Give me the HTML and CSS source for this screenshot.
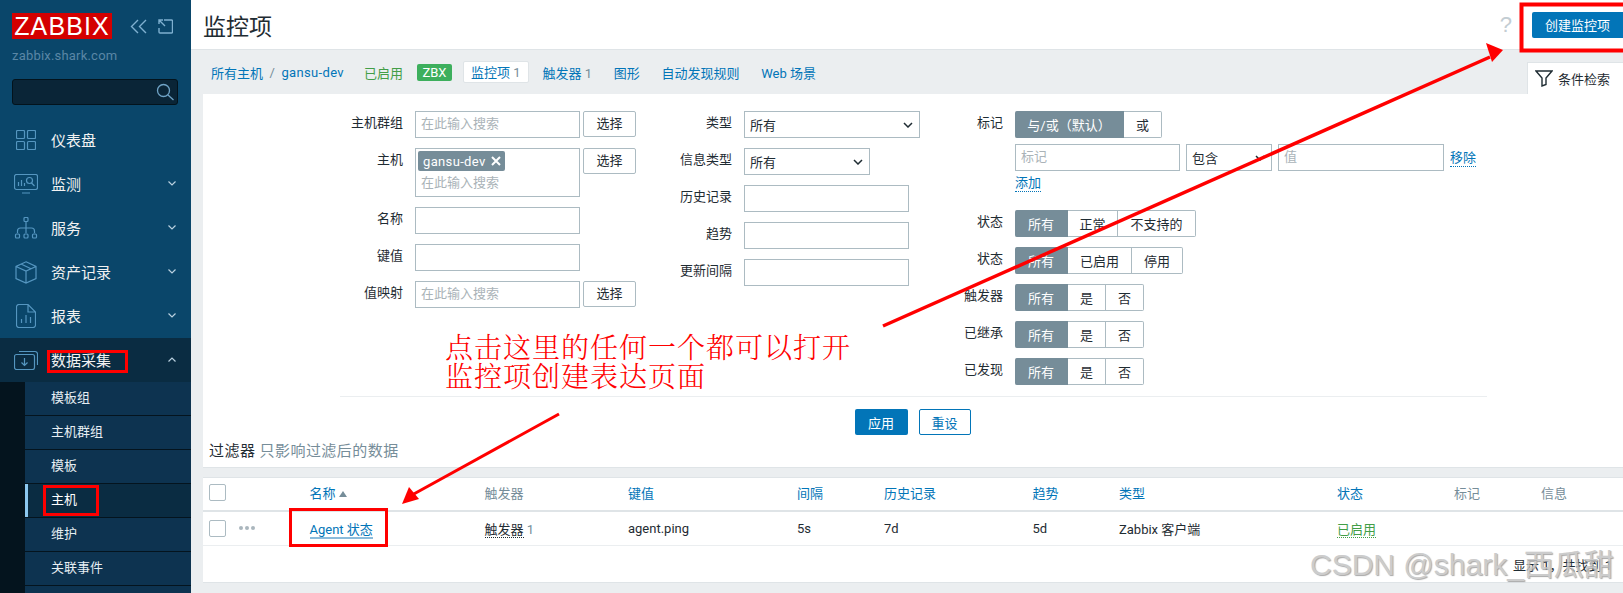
FILE: index.html
```html
<!DOCTYPE html>
<html lang="zh-CN">
<head>
    <meta charset="UTF-8">
    <meta name="viewport" content="width=device-width, initial-scale=1.0">
    <title>监控项</title>
    <link rel="stylesheet" href="styles.css">
</head>
<body>
<div class="page">
    <aside class="sidebar">
        <div class="brand">
            <span class="logo">ZABBIX</span>
            <svg class="brand-icon" width="18" height="15" viewBox="0 0 18 15"><path d="M8 1 1.500 7.500 8 14M16 1 9.500 7.500 16 14"/></svg>
            <svg class="brand-icon" width="15" height="15" viewBox="0 0 15 15"><path d="M6 1h7.500a1 1 0 0 1 1 1v11a1 1 0 0 1-1 1H2a1 1 0 0 1-1-1V9M1 1l6 6M1 5V1h4"/></svg>
        </div>
        <div class="hostname">zabbix.shark.com</div>
        <div class="search">
            <svg width="18" height="18" viewBox="0 0 18 18"><circle cx="7.500" cy="7.500" r="6"/><path d="m12 12 5.500 5"/></svg>
        </div>
        <ul class="menu">
            <li><span class="menu-icon"><svg width="20" height="20" viewBox="0 0 20 20"><rect x=".5" y=".5" width="8" height="8" rx="1"/><rect x="11.500" y=".5" width="8" height="8" rx="1"/><rect x=".5" y="11.500" width="8" height="8" rx="1"/><rect x="11.500" y="11.500" width="8" height="8" rx="1"/></svg></span>仪表盘</li>
            <li><span class="menu-icon"><svg width="24" height="20" viewBox="0 0 24 20"><rect x=".5" y=".5" width="23" height="15" rx="2"/><path d="M8 19h8M4.500 12V8M7.500 12V6M10.500 12V9"/><circle cx="15.500" cy="6.500" r="3"/><path d="m17.500 9 3 3"/></svg></span>监测<svg class="chev" width="8" height="5" viewBox="0 0 8 5"><path d="m.5.5 3.500 3.500L7.500.5"/></svg></li>
            <li><span class="menu-icon"><svg width="24" height="22" viewBox="0 0 24 22"><rect x="10" y=".5" width="4" height="4" rx="1"/><path d="M12 4.500V11M3.500 16v-2a3 3 0 0 1 3-3h11a3 3 0 0 1 3 3v2M12 11v5"/><rect x="1.500" y="17" width="4" height="4" rx="1"/><rect x="10" y="17" width="4" height="4" rx="1"/><rect x="18.500" y="17" width="4" height="4" rx="1"/></svg></span>服务<svg class="chev" width="8" height="5" viewBox="0 0 8 5"><path d="m.5.5 3.500 3.500L7.500.5"/></svg></li>
            <li><span class="menu-icon"><svg width="22" height="23" viewBox="0 0 22 23"><path d="M11 .8 21 5.500v12L11 22 1 17.500v-12zM1 5.500 11 10l10-4.500M11 10v12M6 3l10 4.800"/></svg></span>资产记录<svg class="chev" width="8" height="5" viewBox="0 0 8 5"><path d="m.5.5 3.500 3.500L7.500.5"/></svg></li>
            <li><span class="menu-icon"><svg width="20" height="24" viewBox="0 0 20 24"><path d="M12 .5H3a2.500 2.500 0 0 0-2.500 2.500v18A2.500 2.500 0 0 0 3 23.500h14a2.500 2.500 0 0 0 2.500-2.500V8zM12 .5V8h7.500M5.500 19v-4M10 19v-8M14.500 19v-6"/></svg></span>报表<svg class="chev" width="8" height="5" viewBox="0 0 8 5"><path d="m.5.5 3.500 3.500L7.500.5"/></svg></li>
            <li class="open"><span class="menu-icon"><svg width="24" height="20" viewBox="0 0 24 20"><rect x=".5" y="4.500" width="20" height="15" rx="2"/><path d="M5 1.500h16a2.500 2.500 0 0 1 2.500 2.500v11M10.500 8v7M7.500 12.500l3 3 3-3"/></svg></span>数据采集<svg class="chev" width="8" height="5" viewBox="0 0 8 5"><path d="M.5 4.500 4 1l3.500 3.500"/></svg></li>
        </ul>
        <div class="submenu-wrap">
            <ul class="submenu">
                <li>模板组</li>
                <li>主机群组</li>
                <li>模板</li>
                <li class="current">主机</li>
                <li>维护</li>
                <li>关联事件</li>
            </ul>
        </div>
    </aside>

    <main class="main">
        <header class="top-bar">
            <h1>监控项</h1>
            <span class="help">?</span>
            <button class="btn-primary create">创建监控项</button>
        </header>

        <nav class="host-nav">
            <a class="crumb">所有主机</a>
            <span class="crumb-sep">/</span>
            <a class="crumb latin">gansu-dev</a>
            <span class="enabled">已启用</span>
            <span class="badge">ZBX</span>
            <a class="nav-tab active">监控项 <span class="num">1</span></a>
            <a class="nav-tab">触发器 <span class="num">1</span></a>
            <a class="nav-tab">图形</a>
            <a class="nav-tab">自动发现规则</a>
            <a class="nav-tab">Web 场景</a>
            <div class="filter-tab">
                <svg width="18" height="17" viewBox="0 0 18 17"><path d="M1 1h16l-6 7v6.500L7 16V8z"/></svg>
                条件检索
            </div>
        </nav>

        <section class="filter">
            <div class="filter-form">
                <div class="col col-1">
                    <label>主机群组</label>
                    <div class="field"><input class="w165" placeholder="在此输入搜索"><button class="btn-alt">选择</button></div>
                    <label>主机</label>
                    <div class="field">
                        <div class="multi">
                            <span class="chip">gansu-dev <svg width="10" height="10" viewBox="0 0 10 10"><path d="m1 1 8 8M9 1 1 9"/></svg></span>
                            <span class="multi-hint">在此输入搜索</span>
                        </div>
                        <button class="btn-alt">选择</button>
                    </div>
                    <label>名称</label>
                    <div class="field"><input class="w165"></div>
                    <label>键值</label>
                    <div class="field"><input class="w165"></div>
                    <label>值映射</label>
                    <div class="field"><input class="w165" placeholder="在此输入搜索"><button class="btn-alt">选择</button></div>
                </div>

                <div class="col col-2">
                    <label>类型</label>
                    <div class="field"><div class="select w176">所有<svg width="10" height="6" viewBox="0 0 10 6"><path d="m1 1 4 4 4-4"/></svg></div></div>
                    <label>信息类型</label>
                    <div class="field"><div class="select w126">所有<svg width="10" height="6" viewBox="0 0 10 6"><path d="m1 1 4 4 4-4"/></svg></div></div>
                    <label>历史记录</label>
                    <div class="field"><input class="w165"></div>
                    <label>趋势</label>
                    <div class="field"><input class="w165"></div>
                    <label>更新间隔</label>
                    <div class="field"><input class="w165"></div>
                </div>

                <div class="col col-3">
                    <label>标记</label>
                    <div class="tag-block">
                        <div class="seg"><span class="on w109">与/或（默认）</span><span class="w38">或</span></div>
                        <div class="tag-row">
                            <input class="w165" placeholder="标记">
                            <div class="select w86">包含<svg width="10" height="6" viewBox="0 0 10 6"><path d="m1 1 4 4 4-4"/></svg></div>
                            <input class="w166" placeholder="值">
                            <a class="dotted-link">移除</a>
                        </div>
                        <a class="dotted-link add">添加</a>
                    </div>
                    <label>状态</label>
                    <div class="seg"><span class="on w53">所有</span><span class="w50">正常</span><span class="w78">不支持的</span></div>
                    <label>状态</label>
                    <div class="seg"><span class="on w53">所有</span><span class="w64">已启用</span><span class="w51">停用</span></div>
                    <label>触发器</label>
                    <div class="seg"><span class="on w53">所有</span><span class="w38">是</span><span class="w38">否</span></div>
                    <label>已继承</label>
                    <div class="seg"><span class="on w53">所有</span><span class="w38">是</span><span class="w38">否</span></div>
                    <label>已发现</label>
                    <div class="seg"><span class="on w53">所有</span><span class="w38">是</span><span class="w38">否</span></div>
                </div>
            </div>
            <div class="filter-actions">
                <button class="btn-primary">应用</button>
                <button class="btn-reset">重设</button>
            </div>
            <div class="filter-note">过滤器 <span>只影响过滤后的数据</span></div>
        </section>

        <section class="list">
            <table>
                <colgroup>
                    <col class="c-check"><col class="c-dots"><col class="c-name"><col class="c-trig"><col class="c-key"><col class="c-int"><col class="c-hist"><col class="c-trend"><col class="c-type"><col class="c-status"><col class="c-tags"><col class="c-info">
                </colgroup>
                <thead>
                    <tr>
                        <th><span class="check"></span></th>
                        <th></th>
                        <th><a>名称</a> <i class="sort"></i></th>
                        <th class="plain">触发器</th>
                        <th><a>键值</a></th>
                        <th><a>间隔</a></th>
                        <th><a>历史记录</a></th>
                        <th><a>趋势</a></th>
                        <th><a>类型</a></th>
                        <th><a>状态</a></th>
                        <th class="plain">标记</th>
                        <th class="plain">信息</th>
                    </tr>
                </thead>
                <tbody>
                    <tr>
                        <td><span class="check"></span></td>
                        <td><span class="dots"><i></i><i></i><i></i></span></td>
                        <td><a class="item-link">Agent 状态</a></td>
                        <td><span class="dotted-dark">触发器</span> <span class="num">1</span></td>
                        <td>agent.ping</td>
                        <td>5s</td>
                        <td>7d</td>
                        <td>5d</td>
                        <td>Zabbix 客户端</td>
                        <td><span class="status-on">已启用</span></td>
                        <td></td>
                        <td></td>
                    </tr>
                </tbody>
            </table>
            <div class="list-foot">显示 1，共找到 1</div>
        </section>
    </main>

    <!-- annotations drawn on top of the screenshot -->
    <svg class="marks" width="1623" height="593" viewBox="0 0 1623 593">
        <g fill="none" stroke="#f00">
            <rect x="1521.500" y="4.500" width="105" height="46" stroke-width="4"/>
            <rect x="48.500" y="351.500" width="78" height="20" stroke-width="3"/>
            <rect x="44.500" y="486.500" width="53" height="28" stroke-width="3"/>
            <rect x="290.500" y="509.500" width="96" height="36" stroke-width="3"/>
            <path d="M883 326 1490 57" stroke-width="3.500"/>
            <path d="M559 414 412 495" stroke-width="3"/>
        </g>
        <path d="M1503 50 1486 43 1492 62z" fill="#f00"/>
        <path d="M402 504 409 487 419 499z" fill="#f00"/>
    </svg>
    <div class="note">点击这里的任何一个都可以打开<br>监控项创建表达页面</div>
    <div class="watermark">CSDN @shark_西瓜甜</div>
</div>
</body>
</html>
```
FILE: styles.css
```css
* { box-sizing: border-box; margin: 0; padding: 0; }
html, body { height: 100%; overflow: hidden; }
body { font-family: Roboto, "Noto Sans CJK SC", sans-serif; font-size: 13px; color: #1f2c33; background: #ebeef0; }
a { color: #0275b8; text-decoration: none; }
ul { list-style: none; }

.page { position: relative; display: flex; width: 1623px; height: 593px; overflow: hidden; }

/* sidebar */
.sidebar { width: 191px; flex: none; background: #0a466a; color: #f2f2f2; display: flex; flex-direction: column; }
.sidebar > * { flex: none; }
.brand { display: flex; align-items: center; padding: 13px 0 0 12px; height: 39px; }
.logo { width: 100px; height: 26px; background: #d40000; color: #fff; font-family: "Liberation Sans", sans-serif; font-size: 25px; line-height: 26px; letter-spacing: 1.100px; text-align: center; }
.brand-icon { margin-left: 18px; fill: none; stroke: #7fb0d0; stroke-width: 1.400; }
.brand-icon + .brand-icon { margin-left: 10px; }
.hostname { margin: 9px 0 0 12px; height: 15px; font-size: 13px; line-height: 15px; color: #5a87a6; letter-spacing: .2px; }
.search { margin: 16px 0 0 12px; width: 166px; height: 26px; background: #0a2537; border: 1px solid #03131c; border-radius: 3px; display: flex; justify-content: flex-end; align-items: center; padding-right: 3px; }
.search svg { fill: none; stroke: #6fa3c6; stroke-width: 1.300; }

.menu { margin-top: 13px; }
.menu li { position: relative; display: flex; align-items: center; height: 44px; padding: 0 0 2px 51px; font-size: 15px; color: #f2f2f2; }
.menu .open { background: #0a2c42; }
.menu-icon { position: absolute; left: 0; top: 0; width: 51px; height: 44px; display: flex; align-items: center; justify-content: center; }
.menu-icon svg { fill: none; stroke: #5596c0; stroke-width: 1.200; }
.chev { position: absolute; left: 168px; top: 19px; fill: none; stroke: #b9d0df; stroke-width: 1.200; }
.sidebar .submenu-wrap { flex: 1; background: #04141e; padding-left: 25px; }
.submenu { background: #0d3350; height: 100%; }
.submenu li { height: 34px; line-height: 32px; padding-left: 26px; color: #e6eef3; border-bottom: 1px solid #04141e; }
.submenu .current { background: #0a2c42; box-shadow: inset 3px 0 0 #8cc8f0; color: #fff; }

/* main */
.main { flex: 1; min-width: 0; }
.top-bar { display: flex; align-items: center; height: 50px; background: #fff; border-bottom: 1px solid #dfe4e7; padding-left: 12px; }
.top-bar h1 { font-size: 23px; font-weight: 400; flex: 1; }
.help { font-size: 22px; color: #c3cdd3; margin-right: 20px; font-family: "Liberation Sans", sans-serif; }
.btn-primary { height: 26px; padding: 0; width: 53px; border: none; border-radius: 2px; background: #0275b8; color: #fff; font: inherit; }
.btn-primary.create { width: 91px; flex: none; border-radius: 2px 0 0 2px; }

.host-nav { position: relative; display: flex; align-items: center; height: 44px; padding-left: 20px; }
.crumb-sep { margin: 0 6.500px; color: #768d99; }
.latin { letter-spacing: .35px; }
.enabled { color: #429e47; margin-left: 20px; }
.badge { margin-left: 14px; background: #3daf5d; color: #fff; width: 35px; height: 17px; line-height: 17px; text-align: center; border-radius: 2px; }
.nav-tab { margin-left: 21.700px; }
.nav-tab.active { margin-left: 11px; background: #fff; padding: 2px 7px; height: 22px; line-height: 18px; border: 1px solid #dfe4e7; border-radius: 2px; }
.nav-tab.active + .nav-tab { margin-left: 14px; }
.num { color: #768d99; }
.filter-tab { position: absolute; right: 0; top: 12px; width: 96px; height: 32px; background: #fff; border: 1px solid #dfe4e7; border-width: 1px 0 0 1px; display: flex; align-items: center; gap: 5px; padding-left: 7px; white-space: nowrap; }
.filter-tab svg { fill: none; stroke: #1f2c33; stroke-width: 1.400; flex: none; }

.filter { margin-left: 12px; height: 374px; background: #fff; border-bottom: 1px solid #dfe4e7; }
.filter-form { display: flex; padding-top: 17px; height: 304px; position: relative; }
.filter-form::after { content: ""; position: absolute; left: 137px; width: 1147px; top: 302px; border-top: 1px solid #ebeef0; }
.col { display: grid; align-content: start; column-gap: 12px; row-gap: 10px; }
.col-1 { grid-template-columns: 200px 221px; width: 441px; }
.col-2 { grid-template-columns: 88px 176px; width: 281px; }
.col-3 { grid-template-columns: 78px auto; }
.col label { text-align: right; line-height: 24px; }

.field { display: flex; align-items: flex-start; gap: 3px; }
input, .select, .multi { border: 1px solid #acbbc2; background: #fff; height: 27px; font: inherit; color: #1f2c33; border-radius: 0; }
input { padding: 0 5px 2px; outline: none; }
input::placeholder { color: #aab3b8; opacity: 1; }
.w165 { width: 165px; }
.w166 { width: 166px; }
.w176 { width: 176px; }
.w126 { width: 126px; }
.w86 { width: 86px; }
.select { display: flex; align-items: center; justify-content: space-between; padding: 0 6px 0 5px; }
.select svg { fill: none; stroke: #1f2c33; stroke-width: 1.500; flex: none; }
.btn-alt { width: 53px; height: 26px; padding-bottom: 3px; background: #fff; border: 1px solid #acbbc2; border-radius: 2px; font: inherit; color: #1f2c33; }
.multi { width: 165px; height: 49px; padding: 2px; display: flex; flex-direction: column; align-items: flex-start; }
.chip { display: flex; align-items: center; gap: 5px; height: 20px; padding: 0 4px 0 5px; background: #768d99; color: #fff; border-radius: 2px; white-space: nowrap; letter-spacing: .35px; }
.chip svg { fill: none; stroke: #fff; stroke-width: 2; }
.multi-hint { color: #aab3b8; padding: 2px 3px 0; line-height: 20px; }

.tag-block { height: 89px; }
.tag-row { display: flex; align-items: center; gap: 6px; margin-top: 6px; }
.add { display: inline-block; margin-top: 3px; }
.dotted-link { color: #0275b8; border-bottom: 1px dotted #0275b8; line-height: 17px; }
.seg { display: flex; height: 27px; }
.seg span { display: flex; align-items: center; justify-content: center; border: 1px solid #acbbc2; border-left: none; background: #fff; }
.seg span:last-child { border-radius: 0 2px 2px 0; }
.seg .on { background: #768d99; border-color: #768d99; color: #fff; border-radius: 2px 0 0 2px; }
.w109 { width: 109px; }
.w38 { width: 38px; }
.w53 { width: 53px; }
.w50 { width: 50px; }
.w78 { width: 78px; }
.w64 { width: 64px; }
.w51 { width: 51px; }

.filter-actions { display: flex; justify-content: center; gap: 11px; padding: 11px 1px 0 0; }
.btn-reset { width: 52px; height: 26px; background: #fff; border: 1px solid #0275b8; border-radius: 2px; color: #0275b8; font: inherit; }
.filter-note { padding: 5px 0 0 6px; font-size: 15px; line-height: 22px; letter-spacing: .45px; color: #1f2c33; }
.filter-note span { color: #768d99; }

/* list */
.list { margin: 9px 0 0 12px; height: 106px; background: #fff; border-top: 1px solid #dfe4e7; border-bottom: 1px solid #dfe4e7; }
table { width: 1420px; table-layout: fixed; border-collapse: collapse; }
.c-check { width: 36px; }
.c-dots { width: 70.500px; }
.c-name { width: 175px; }
.c-trig { width: 143.500px; }
.c-key { width: 169px; }
.c-int { width: 87px; }
.c-hist { width: 148.500px; }
.c-trend { width: 86.500px; }
.c-type { width: 218px; }
.c-status { width: 117px; }
.c-tags { width: 87px; }
.c-info { width: 82px; }
th { height: 33px; padding-bottom: 3px; font-weight: 400; text-align: left; border-bottom: 2px solid #dfe4e7; }
th.plain { color: #768d99; }
td { height: 34px; border-bottom: 1px solid #ebeef0; }
th:first-child, td:first-child { padding-left: 6px; }
.check { display: block; width: 17px; height: 17px; border: 1px solid #acbbc2; border-radius: 2px; }
.sort { display: inline-block; border: 4px solid transparent; border-top: none; border-bottom: 6px solid #768d99; vertical-align: 1px; }
.dots { display: flex; gap: 2px; }
.dots i { width: 4px; height: 4px; border-radius: 50%; background: #aab6bd; }
.item-link { border-bottom: 2px solid #8abbdb; }
.dotted-dark { border-bottom: 1px dotted #1f2c33; }
.status-on { color: #429e47; border-bottom: 1px dotted #429e47; }
.list-foot { text-align: right; padding: 9px 11px 0 0; }

/* annotations */
.marks { position: absolute; left: 0; top: 0; pointer-events: none; }
.note { position: absolute; left: 445px; top: 332px; color: #f00; font-family: "Noto Serif CJK SC", "Noto Sans CJK SC", serif; font-size: 28px; line-height: 29px; font-weight: 300; letter-spacing: 1px; white-space: nowrap; }
.watermark { position: absolute; left: 1310px; top: 547px; font-family: "Liberation Sans", "Noto Sans CJK SC", sans-serif; font-size: 30px; line-height: 36px; color: #c4c4c4; text-shadow: 1px 1px 1px #9a9a9a; white-space: nowrap; opacity: .85; }
```
